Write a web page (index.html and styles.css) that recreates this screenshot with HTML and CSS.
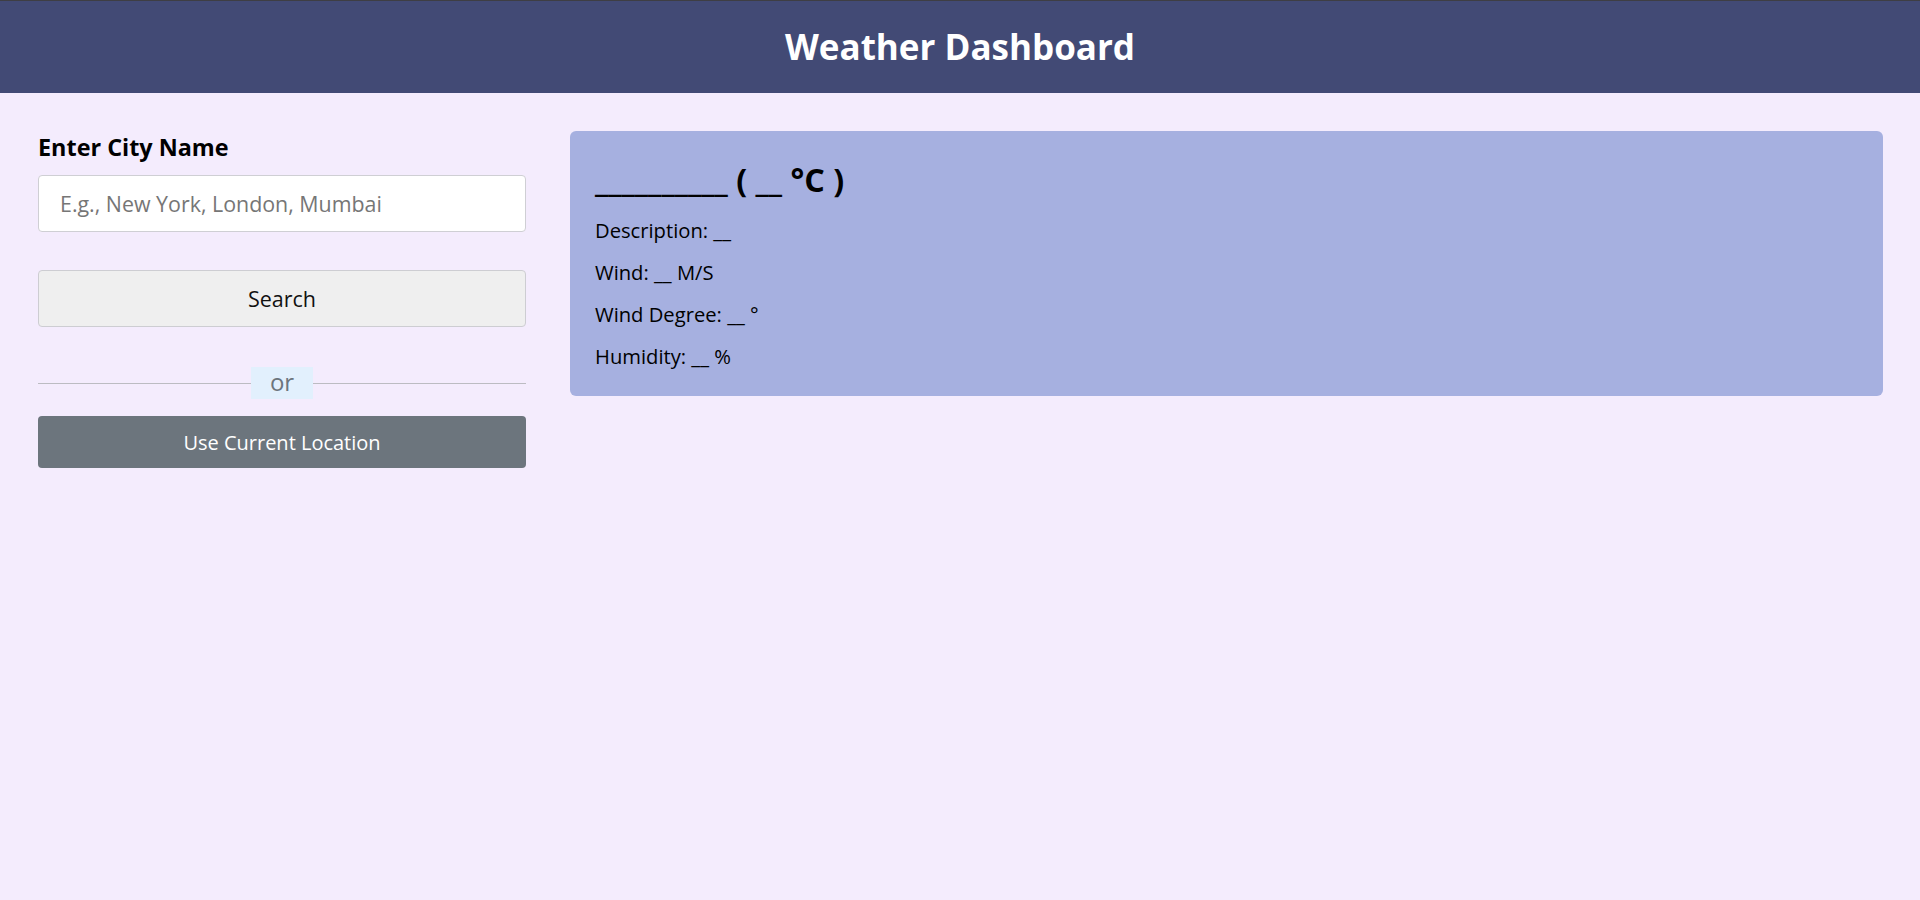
FILE: index.html
```html
<!DOCTYPE html>
<html lang="en">
<head>
<meta charset="utf-8">
<title>Weather Dashboard</title>
<link rel="stylesheet" href="styles.css">
</head>
<body>
<header class="topbar">
  <h1 class="title">Weather Dashboard</h1>
</header>
<main class="layout">
  <section class="search-panel">
    <label class="city-label" for="city">Enter City Name</label>
    <input class="city-input" id="city" type="text" placeholder="E.g., New York, London, Mumbai">
    <button class="btn btn-search" type="button">Search</button>
    <div class="divider"><span class="divider-text">or</span></div>
    <button class="btn btn-location" type="button">Use Current Location</button>
  </section>
  <section class="weather-card">
    <h2 class="weather-title">__________ ( __ °C )</h2>
    <div class="weather-lines">
      <p class="weather-line">Description: __</p>
      <p class="weather-line">Wind: __ M/S</p>
      <p class="weather-line">Wind Degree: __ °</p>
      <p class="weather-line">Humidity: __ %</p>
    </div>
  </section>
</main>
</body>
</html>
```
FILE: styles.css
```css
* { box-sizing: border-box; }
html, body { margin: 0; padding: 0; }
body {
  background: #f4ecfd;
  font-family: "Open Sans", "Noto Sans", sans-serif;
  color: #000;
  min-height: 900px;
}
.topbar {
  background: #424a75;
  border-top: 1px solid #3e3e44;
  height: 93px;
  display: flex;
  align-items: center;
  justify-content: center;
}
.title {
  margin: 0;
  color: #fff;
  font-size: 35px;
  font-weight: 700;
  line-height: 1.2;
}
.layout {
  display: flex;
  align-items: flex-start;
  gap: 44px;
  padding: 38px 37px 0 38px;
}
.search-panel {
  width: 488px;
  flex: none;
  display: flex;
  flex-direction: column;
}
.city-label {
  font-size: 23.4px;
  font-weight: 700;
  line-height: 30px;
  margin-top: 1px;
  margin-bottom: 13px;
}
.city-input {
  height: 57px;
  width: 100%;
  border: 1px solid #cfcfd4;
  border-radius: 4px;
  background: #fff;
  padding: 0 21px;
  font-family: inherit;
  font-size: 21.4px;
  color: #212529;
  outline: none;
}
.city-input::placeholder { color: #767676; }
.btn {
  width: 100%;
  font-family: inherit;
  border-radius: 4px;
  cursor: pointer;
}
.btn-search {
  margin-top: 38px;
  height: 57px;
  background: #efefef;
  border: 1px solid #cdcdd2;
  color: #111;
  font-size: 21.5px;
}
.divider {
  margin-top: 40px;
  height: 32px;
  display: flex;
  align-items: center;
  justify-content: center;
  background: linear-gradient(#bcbcc2, #bcbcc2) center / 100% 1px no-repeat;
}
.divider-text {
  display: block;
  width: 62px;
  height: 32px;
  line-height: 30px;
  text-align: center;
  background: #e2f0fd;
  color: #6c757d;
  font-size: 24px;
}
.btn-location {
  margin-top: 17px;
  height: 52px;
  background: #6c757d;
  border: none;
  color: #fff;
  font-size: 20px;
}
.weather-card {
  flex: 1;
  background: #a6b0e0;
  border-radius: 6px;
  padding: 29px 25px 25px;
  min-height: 264px;
}
.weather-title {
  margin: 0;
  font-size: 32.3px;
  font-weight: 700;
  line-height: 1.2;
}
.weather-lines {
  margin-top: 16px;
  display: flex;
  flex-direction: column;
  gap: 12px;
}
.weather-line {
  margin: 0;
  font-size: 20.2px;
  line-height: 30px;
}
```
